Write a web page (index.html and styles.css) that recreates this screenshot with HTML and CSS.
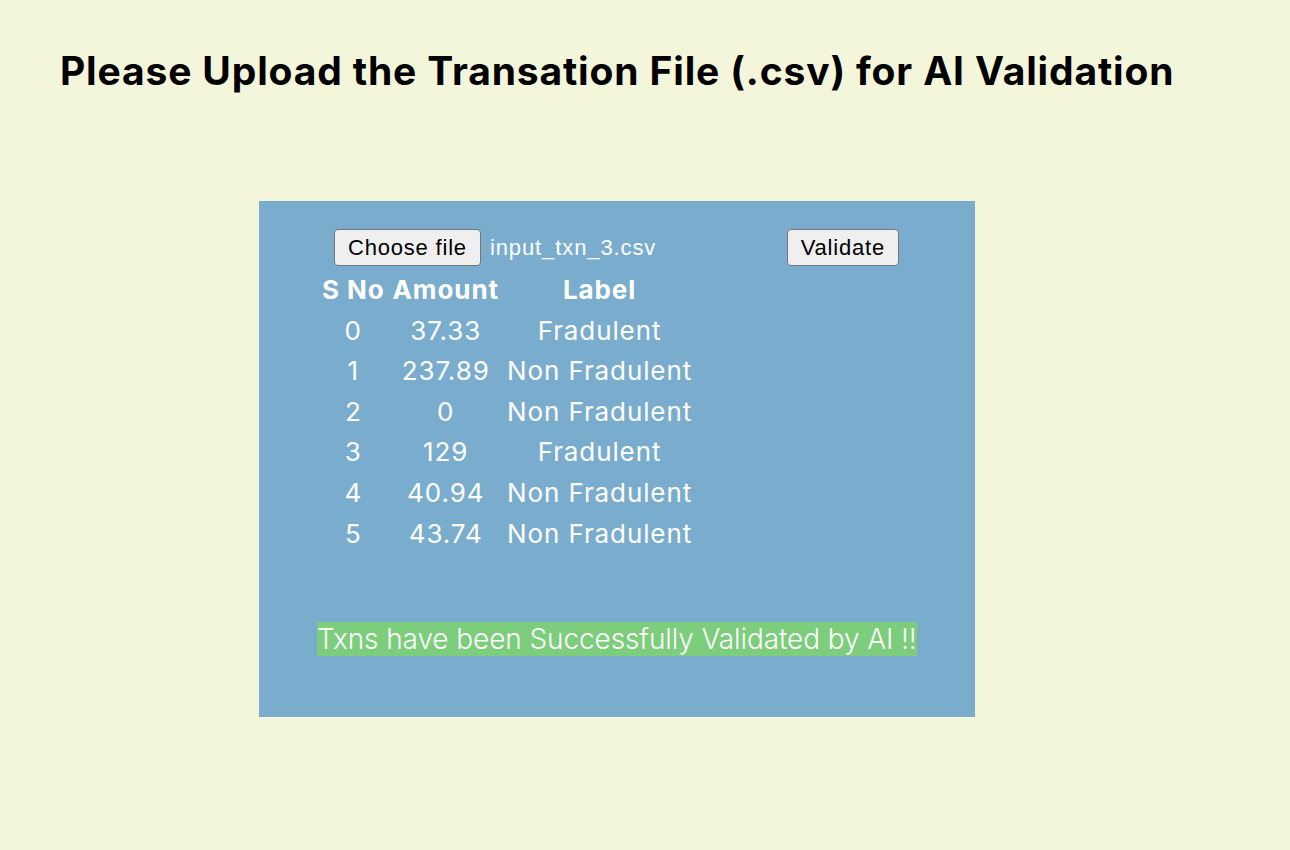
FILE: index.html
```html
<!DOCTYPE html>
<html lang="en">
<head>
<meta charset="utf-8">
<title>AI Validation</title>
<link rel="stylesheet" href="styles.css">
</head>
<body>
<main class="page">
  <h1 class="title">Please Upload the Transation File (.csv) for AI Validation</h1>
  <section class="panel">
    <div class="content">
      <div class="toolbar">
        <div class="file-picker">
          <button class="btn" type="button">Choose file</button>
          <span class="file-name">input_txn_3.csv</span>
        </div>
        <button class="btn" type="button">Validate</button>
      </div>
      <table class="results">
        <thead>
          <tr><th>S No</th><th>Amount</th><th>Label</th></tr>
        </thead>
        <tbody>
          <tr><td>0</td><td>37.33</td><td>Fradulent</td></tr>
          <tr><td>1</td><td>237.89</td><td>Non Fradulent</td></tr>
          <tr><td>2</td><td>0</td><td>Non Fradulent</td></tr>
          <tr><td>3</td><td>129</td><td>Fradulent</td></tr>
          <tr><td>4</td><td>40.94</td><td>Non Fradulent</td></tr>
          <tr><td>5</td><td>43.74</td><td>Non Fradulent</td></tr>
        </tbody>
      </table>
      <p class="status"><span class="status-text">Txns have been Successfully Validated by AI !!</span></p>
    </div>
  </section>
</main>
</body>
</html>
```

FILE: styles.css
```css
html, body {
  margin: 0;
  padding: 0;
}

body {
  background: #f3f6da;
  font-family: Inter, "Noto Sans", sans-serif;
  color: #000;
}

.page {
  padding: 47px 60px 0;
}

.title {
  margin: 0;
  font-size: 39px;
  font-weight: 700;
  line-height: 47px;
  letter-spacing: 0.85px;
}

.panel {
  width: 716px;
  height: 516px;
  box-sizing: border-box;
  margin: 107px 0 0 199px;
  background: #7aadcd;
  padding: 28px 58px 0;
}

.content {
  width: 600px;
}

.toolbar {
  display: flex;
  justify-content: space-between;
  align-items: center;
  padding: 0 18px 0 17px;
}

.file-picker {
  display: flex;
  align-items: center;
  gap: 9px;
}

.btn {
  height: 37px;
  padding: 0 13px;
  font-family: "Liberation Sans", Arial, sans-serif;
  font-size: 22px;
  letter-spacing: 0.8px;
  color: #000;
  background: #efefef;
  border: 1px solid #767676;
  border-radius: 4px;
}

.file-name {
  font-family: "Liberation Sans", Arial, sans-serif;
  font-size: 22px;
  letter-spacing: 0.9px;
  color: #fff;
}

.results {
  margin-top: 3px;
  border-spacing: 2px;
  color: #fff;
  font-size: 26px;
  letter-spacing: 0.9px;
}

.results th,
.results td {
  padding: 3px 3px;
  line-height: 32.6px;
  text-align: center;
}

.results th {
  font-weight: 700;
}

.status {
  margin: 67px 0 0;
  font-size: 28px;
  font-weight: 300;
  line-height: 34px;
  white-space: nowrap;
}

.status-text {
  background: #7ccd7c;
  color: #fff;
  letter-spacing: -0.1px;
}
```
